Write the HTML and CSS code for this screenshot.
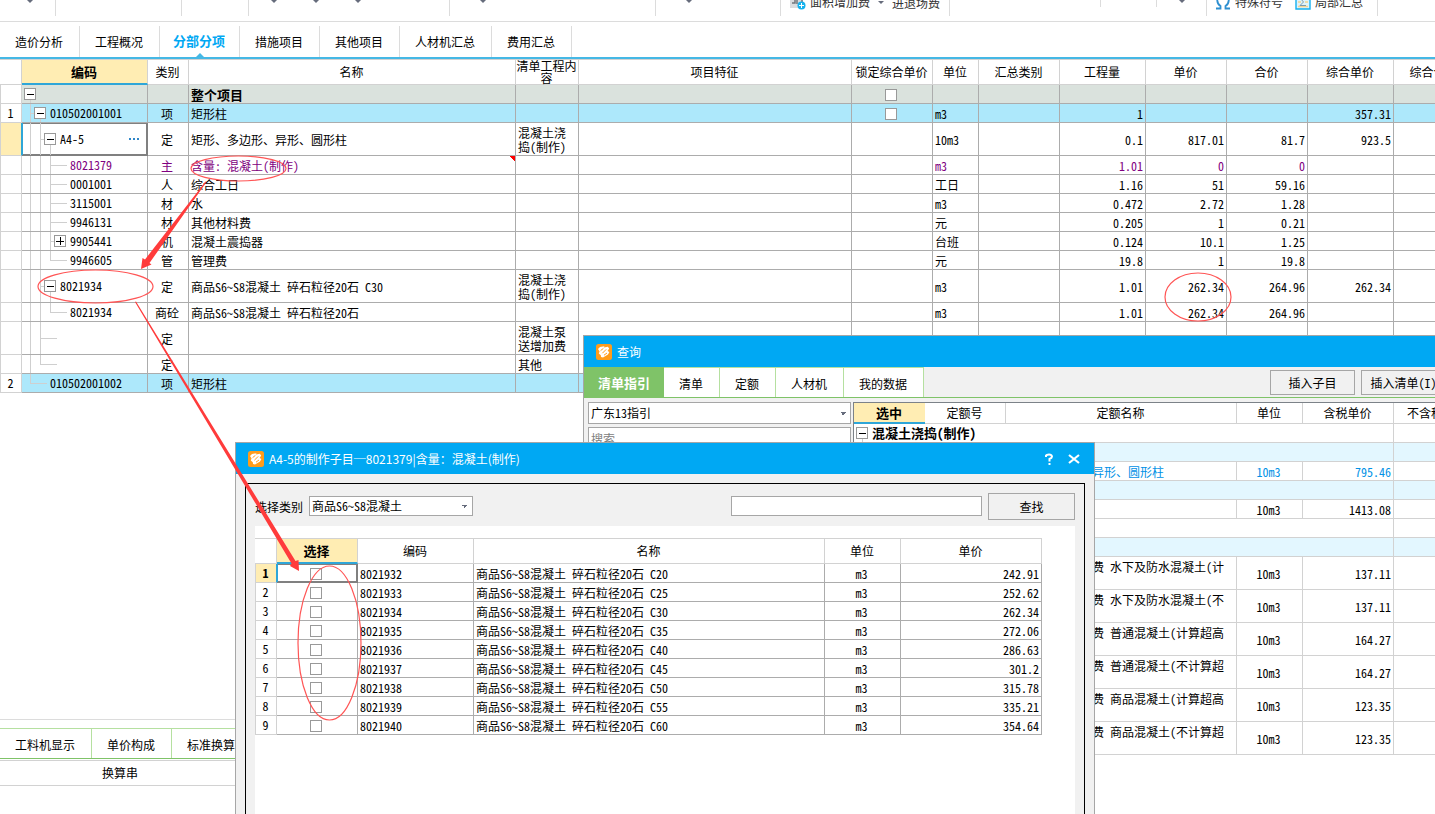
FILE: index.html
```html
<!DOCTYPE html>
<html lang="zh-CN">
<head>
<meta charset="utf-8">
<title>分部分项</title>
<link rel="stylesheet" href="styles.css">
</head>
<body>
<svg width="0" height="0" class="defs" aria-hidden="true">
  <symbol id="logo" viewBox="0 0 16 16">
    <rect width="16" height="16" rx="2.500" fill="#ff9c1a"/>
    <path d="M2 5 4 3 8.400 2.200 8 3.600 11.800 2.800 13.200 4.600 11.600 7 13.400 8 12 10.400 7 13.600 5 13 4.800 11.200 2.800 9.400 3.600 7.400Z" fill="#fff"/>
    <path d="M4.600 6.600 7.400 4.400M6.400 9.200 10.200 5.400M8 11.200 11 9" stroke="#ff9c1a" stroke-width="1" fill="none"/>
  </symbol>
</svg>
<main class="app">
  <div class="toolbar">
    <div class="group g1"><i class="caret"></i></div>
    <div class="group g2"></div>
    <div class="group g3"></div>
    <div class="group g4"><i class="caret"></i><i class="caret"></i><i class="caret"></i></div>
    <div class="group g5"><i class="caret"></i></div>
    <div class="group g6"><i class="caret"></i></div>
    <div class="group g7">
      <button class="tool">
        <svg width="16" height="16" viewBox="0 0 16 16"><path d="M0 1h13v13H0z" fill="#d9dcdf"/><path d="M2 5h3v4H2M7 4v6M9 5h3v3" stroke="#70757c" stroke-width="1.500" fill="none"/><circle cx="11.500" cy="11.500" r="4" fill="#16b2ee"/><path d="M9 11.500h5M11.500 9v5" stroke="#fff"/></svg>
        面积增加费<i class="caret"></i></button>
      <button class="tool low">进退场费</button>
    </div>
    <div class="group g8"></div>
    <div class="group short g9"></div>
    <div class="group g10"><i class="caret"></i></div>
    <div class="group g11">
      <button class="tool">
        <svg width="16" height="16" viewBox="0 0 16 16"><path d="M1 14.500h4.500v-2.500C1.500 9.500 1 3 5 1.500M15 14.500h-4.500v-2.500c4-2.500 4.500-9 .5-10.500" fill="none" stroke="#2d8fd0" stroke-width="1.800"/></svg>
        特殊符号</button>
      <button class="tool">
        <svg width="16" height="16" viewBox="0 0 16 16"><path d="M1 1h14v14H1z" fill="#dff3fb" stroke="#14b0ee" stroke-width="1.400"/><path d="M3 12.500h10M3 8h3M10 8h3" stroke="#f2d492" stroke-width="1.500"/><path d="M11 4.500H5.500L8.500 8 5 11.500h6" fill="none" stroke="#7f9aac"/></svg>
        局部汇总</button>
    </div>
  </div>

  <nav class="tabs">
    <a href="#">造价分析</a><a href="#">工程概况</a><a href="#" class="on">分部分项</a><a href="#">措施项目</a><a href="#">其他项目</a><a href="#">人材机汇总</a><a href="#">费用汇总</a>
  </nav>

  <section class="sheet">
    <table class="grid main">
      <colgroup><col class="w22"><col class="w126"><col class="w41"><col><col class="w63"><col class="w273"><col class="w81"><col class="w46"><col class="w81"><col class="w86"><col class="w81"><col class="w81"><col class="w86"><col class="w81"></colgroup>
      <thead><tr><th></th><th class="hot">编码</th><th>类别</th><th>名称</th><th class="tight">清单工程内容</th><th>项目特征</th><th>锁定综合单价</th><th>单位</th><th>汇总类别</th><th>工程量</th><th>单价</th><th>合价</th><th>综合单价</th><th>综合合价</th></tr></thead>
      <tbody>
        <tr class="total"><td class="no"></td><td><div class="tree root"><b class="box open"></b></div></td><td></td><td><strong>整个项目</strong></td><td></td><td></td><td class="c"><input type="checkbox" aria-label="锁定整个项目"></td><td></td><td></td><td></td><td></td><td></td><td></td><td></td></tr>
        <tr class="item"><td class="no">1</td><td><div class="tree"><i class="tee near"></i><b class="box open"></b>010502001001</div></td><td class="c">项</td><td>矩形柱</td><td></td><td></td><td class="c"><input type="checkbox" aria-label="锁定矩形柱"></td><td>m3</td><td></td><td class="r">1</td><td></td><td></td><td class="r">357.31</td><td></td></tr>
        <tr class="tall"><td class="no cur"></td><td class="focus"><div class="tree"><i class="bar"></i><i class="tee near"></i><b class="box open"></b>A4-5<button class="more" aria-label="更多"><i></i><i></i><i></i></button></div></td><td class="c">定</td><td>矩形、多边形、异形、圆形柱</td><td>混凝土浇捣(制作)</td><td></td><td></td><td>10m3</td><td></td><td class="r">0.1</td><td class="r">817.01</td><td class="r">81.7</td><td class="r">923.5</td><td></td></tr>
        <tr class="main-mat"><td class="no"></td><td><div class="tree"><i class="bar"></i><i class="bar"></i><i class="tee"></i>8021379</div></td><td class="c">主</td><td class="note">含量: 混凝土(制作)</td><td></td><td></td><td></td><td>m3</td><td></td><td class="r">1.01</td><td class="r">0</td><td class="r">0</td><td></td><td></td></tr>
        <tr><td class="no"></td><td><div class="tree"><i class="bar"></i><i class="bar"></i><i class="tee"></i>0001001</div></td><td class="c">人</td><td>综合工日</td><td></td><td></td><td></td><td>工日</td><td></td><td class="r">1.16</td><td class="r">51</td><td class="r">59.16</td><td></td><td></td></tr>
        <tr><td class="no"></td><td><div class="tree"><i class="bar"></i><i class="bar"></i><i class="tee"></i>3115001</div></td><td class="c">材</td><td>水</td><td></td><td></td><td></td><td>m3</td><td></td><td class="r">0.472</td><td class="r">2.72</td><td class="r">1.28</td><td></td><td></td></tr>
        <tr><td class="no"></td><td><div class="tree"><i class="bar"></i><i class="bar"></i><i class="tee"></i>9946131</div></td><td class="c">材</td><td>其他材料费</td><td></td><td></td><td></td><td>元</td><td></td><td class="r">0.205</td><td class="r">1</td><td class="r">0.21</td><td></td><td></td></tr>
        <tr><td class="no"></td><td><div class="tree"><i class="bar"></i><i class="bar"></i><i class="tee near"></i><b class="box"></b>9905441</div></td><td class="c">机</td><td>混凝土震捣器</td><td></td><td></td><td></td><td>台班</td><td></td><td class="r">0.124</td><td class="r">10.1</td><td class="r">1.25</td><td></td><td></td></tr>
        <tr><td class="no"></td><td><div class="tree"><i class="bar"></i><i class="bar"></i><i class="tee end"></i>9946605</div></td><td class="c">管</td><td>管理费</td><td></td><td></td><td></td><td>元</td><td></td><td class="r">19.8</td><td class="r">1</td><td class="r">19.8</td><td></td><td></td></tr>
        <tr class="tall"><td class="no"></td><td><div class="tree"><i class="bar"></i><i class="tee near"></i><b class="box open"></b>8021934</div></td><td class="c">定</td><td>商品S6~S8混凝土 碎石粒径20石 C30</td><td>混凝土浇捣(制作)</td><td></td><td></td><td>m3</td><td></td><td class="r">1.01</td><td class="r">262.34</td><td class="r">264.96</td><td class="r">262.34</td><td></td></tr>
        <tr><td class="no"></td><td><div class="tree"><i class="bar"></i><i class="bar"></i><i class="tee end"></i>8021934</div></td><td class="c">商砼</td><td>商品S6~S8混凝土 碎石粒径20石</td><td></td><td></td><td></td><td>m3</td><td></td><td class="r">1.01</td><td class="r">262.34</td><td class="r">264.96</td><td></td><td></td></tr>
        <tr class="tall"><td class="no"></td><td><div class="tree"><i class="bar"></i><i class="tee"></i></div></td><td class="c">定</td><td></td><td>混凝土泵送增加费</td><td></td><td></td><td></td><td></td><td></td><td></td><td></td><td></td><td></td></tr>
        <tr><td class="no"></td><td><div class="tree"><i class="bar"></i><i class="tee end"></i></div></td><td class="c">定</td><td></td><td>其他</td><td></td><td></td><td></td><td></td><td></td><td></td><td></td><td></td><td></td></tr>
        <tr class="item"><td class="no">2</td><td><div class="tree"><i class="tee end"></i>010502001002</div></td><td class="c">项</td><td>矩形柱</td><td></td><td></td><td></td><td></td><td></td><td></td><td></td><td></td><td></td><td></td></tr>
      </tbody>
    </table>
  </section>

  <section class="detail">
    <nav class="subtabs"><a href="#">工料机显示</a><a href="#">单价构成</a><a href="#">标准换算</a></nav>
    <div class="subhead"><span>换算串</span></div>
  </section>
</main>

<section class="window query" aria-label="查询">
  <header class="title"><svg width="16" height="16"><use href="#logo"/></svg>查询</header>
  <div class="qbar">
    <nav class="qtabs"><a href="#" class="on">清单指引</a><a href="#">清单</a><a href="#">定额</a><a href="#">人材机</a><a href="#">我的数据</a></nav>
    <div class="qbtns"><button class="btn">插入子目</button><button class="btn">插入清单(I)</button></div>
  </div>
  <div class="qbody">
    <div class="side">
      <select aria-label="指引"><option>广东13指引</option></select>
      <input type="text" placeholder="搜索" aria-label="搜索">
    </div>
    <div class="result">
      <table class="grid light">
        <colgroup><col class="w71"><col class="w81"><col class="w231"><col class="w66"><col class="w91"><col></colgroup>
        <thead><tr><th class="hot">选中</th><th>定额号</th><th>定额名称</th><th>单位</th><th>含税单价</th><th class="l">不含税单价</th></tr></thead>
        <tbody>
          <tr><td colspan="5"><div class="tree root"><b class="box open"></b><strong>混凝土浇捣(制作)</strong></div></td><td></td></tr>
          <tr class="band"><td colspan="5"></td><td></td></tr>
          <tr class="link"><td></td><td></td><td>矩形、多边形、异形、圆形柱</td><td class="c">10m3</td><td class="r">795.46</td><td></td></tr>
          <tr class="band"><td colspan="5"></td><td></td></tr>
          <tr><td></td><td></td><td></td><td class="c">10m3</td><td class="r">1413.08</td><td></td></tr>
          <tr><td colspan="5"></td><td></td></tr>
          <tr class="band"><td colspan="5"></td><td></td></tr>
          <tr class="tall"><td></td><td></td><td class="t">混凝土泵送增加费 水下及防水混凝土(计</td><td class="c">10m3</td><td class="r">137.11</td><td></td></tr>
          <tr class="tall"><td></td><td></td><td class="t">混凝土泵送增加费 水下及防水混凝土(不</td><td class="c">10m3</td><td class="r">137.11</td><td></td></tr>
          <tr class="tall"><td></td><td></td><td class="t">混凝土泵送增加费 普通混凝土(计算超高</td><td class="c">10m3</td><td class="r">164.27</td><td></td></tr>
          <tr class="tall"><td></td><td></td><td class="t">混凝土泵送增加费 普通混凝土(不计算超</td><td class="c">10m3</td><td class="r">164.27</td><td></td></tr>
          <tr class="tall"><td></td><td></td><td class="t">混凝土泵送增加费 商品混凝土(计算超高</td><td class="c">10m3</td><td class="r">123.35</td><td></td></tr>
          <tr class="tall"><td></td><td></td><td class="t">混凝土泵送增加费 商品混凝土(不计算超</td><td class="c">10m3</td><td class="r">123.35</td><td></td></tr>
        </tbody>
      </table>
    </div>
  </div>
</section>

<section class="window dialog" role="dialog" aria-label="制作子目">
  <header class="title"><svg width="16" height="16"><use href="#logo"/></svg><span class="grow">A4-5的制作子目─8021379|含量：混凝土(制作)</span>
    <button class="cap" aria-label="帮助"><svg width="12" height="12" viewBox="0 0 12 12"><path d="M3 4V2.500Q3.500 1.500 6 1.500T9 3.500Q9 5 6.500 6V8.500M6.500 10v2" fill="none" stroke="#fff" stroke-width="2"/></svg></button>
    <button class="cap" aria-label="关闭"><svg width="12" height="12" viewBox="0 0 12 12"><path d="M1 2 11 10M11 2 1 10" stroke="#fff" stroke-width="2.200"/></svg></button>
  </header>
  <div class="frame">
    <form class="filter">
      <label for="kind">选择类别</label>
      <select id="kind"><option>商品S6~S8混凝土</option></select>
      <input type="text" aria-label="查找内容">
      <button class="btn" type="button">查找</button>
    </form>
    <div class="panel">
      <table class="grid pick">
        <colgroup><col class="w22"><col class="w81"><col class="w116"><col><col class="w76"><col class="w141"></colgroup>
        <thead><tr><th></th><th class="hot">选择</th><th>编码</th><th>名称</th><th>单位</th><th>单价</th></tr></thead>
        <tbody>
          <tr><td class="no cur">1</td><td class="c focus"><input type="checkbox" aria-label="选择 8021932"></td><td>8021932</td><td>商品S6~S8混凝土 碎石粒径20石 C20</td><td class="c">m3</td><td class="r">242.91</td></tr>
          <tr><td class="no">2</td><td class="c"><input type="checkbox" aria-label="选择 8021933"></td><td>8021933</td><td>商品S6~S8混凝土 碎石粒径20石 C25</td><td class="c">m3</td><td class="r">252.62</td></tr>
          <tr><td class="no">3</td><td class="c"><input type="checkbox" aria-label="选择 8021934"></td><td>8021934</td><td>商品S6~S8混凝土 碎石粒径20石 C30</td><td class="c">m3</td><td class="r">262.34</td></tr>
          <tr><td class="no">4</td><td class="c"><input type="checkbox" aria-label="选择 8021935"></td><td>8021935</td><td>商品S6~S8混凝土 碎石粒径20石 C35</td><td class="c">m3</td><td class="r">272.06</td></tr>
          <tr><td class="no">5</td><td class="c"><input type="checkbox" aria-label="选择 8021936"></td><td>8021936</td><td>商品S6~S8混凝土 碎石粒径20石 C40</td><td class="c">m3</td><td class="r">286.63</td></tr>
          <tr><td class="no">6</td><td class="c"><input type="checkbox" aria-label="选择 8021937"></td><td>8021937</td><td>商品S6~S8混凝土 碎石粒径20石 C45</td><td class="c">m3</td><td class="r">301.2</td></tr>
          <tr><td class="no">7</td><td class="c"><input type="checkbox" aria-label="选择 8021938"></td><td>8021938</td><td>商品S6~S8混凝土 碎石粒径20石 C50</td><td class="c">m3</td><td class="r">315.78</td></tr>
          <tr><td class="no">8</td><td class="c"><input type="checkbox" aria-label="选择 8021939"></td><td>8021939</td><td>商品S6~S8混凝土 碎石粒径20石 C55</td><td class="c">m3</td><td class="r">335.21</td></tr>
          <tr><td class="no">9</td><td class="c"><input type="checkbox" aria-label="选择 8021940"></td><td>8021940</td><td>商品S6~S8混凝土 碎石粒径20石 C60</td><td class="c">m3</td><td class="r">354.64</td></tr>
        </tbody>
      </table>
    </div>
  </div>
</section>

<svg class="marks" width="1435" height="814" viewBox="0 0 1435 814" aria-hidden="true">
  <g fill="none" stroke="#f55" stroke-width="1.200">
    <ellipse cx="238.500" cy="168.500" rx="47.500" ry="12.500"/>
    <ellipse cx="95.500" cy="286.500" rx="57.500" ry="16.500"/>
    <ellipse cx="1198" cy="297" rx="33" ry="24"/>
    <ellipse cx="329.500" cy="643" rx="31.500" ry="77"/>
  </g>
  <g fill="#ff3b3b">
    <path d="M206.500 182 149.500 263 151.500 264.500 141 269 142.500 258 145 259.500 205.500 181.500Z"/>
    <path d="M135 302 136 301.500 295.500 561 298.500 560 299 571 290 566 291.500 563.500Z"/>
  </g>
</svg>
</body>
</html>
```

FILE: styles.css
```css
* { box-sizing: border-box; }
html, body { height: 100%; }
body {
  margin: 0;
  overflow: hidden;
  position: relative;
  background: #fff;
  color: #000;
  font: 12px/14px "Noto Sans CJK SC", "Noto Sans", sans-serif;
  font-feature-settings: "hwid";
}
button, input, select { font: inherit; font-feature-settings: inherit; color: inherit; margin: 0; }
a { color: inherit; text-decoration: none; }
strong { font-size: 13px; }
.defs { position: absolute; }

.app { height: 100%; display: flex; flex-direction: column; }

/* toolbar */
.toolbar { display: flex; flex: none; height: 22px; overflow: hidden; border-bottom: 1px solid #dcdcdc; background: #fff; }
.group { flex: none; display: flex; height: 16px; border-right: 1px solid #dcdcdc; justify-content: center; gap: 36px; }
.group.short { height: 7px; }
.g1 { width: 56px; padding-left: 5px; }
.g2 { width: 126px; }
.g3 { width: 67px; }
.g4 { width: 201px; justify-content: flex-start; padding-left: 22px; }
.g5 { width: 206px; justify-content: flex-start; padding-left: 30px; }
.g6 { width: 125px; justify-content: flex-start; padding-left: 30px; }
.g7 { width: 169px; justify-content: flex-start; padding-left: 9px; gap: 8px; }
.g8 { width: 151px; height: 7px; }
.g9 { width: 56px; }
.g10 { width: 50px; }
.g11 { width: 171px; justify-content: flex-start; padding-left: 8px; gap: 12px; }
.caret { flex: none; border: 3px solid transparent; border-top-color: #666c7c; border-bottom: 0; height: 3px; }
.tool { display: flex; align-items: center; align-self: flex-end; gap: 4px; height: 16px; border: 0; padding: 0; margin-bottom: 6px; background: none; color: #333; white-space: nowrap; }
.tool svg { flex: none; }
.tool .caret { margin-left: 4px; }
.tool.low { margin-bottom: 5px; }

/* page tabs */
.tabs { display: flex; flex: none; height: 37px; padding-top: 4px; border-bottom: 2px solid #45b8e5; }
.tabs a { position: relative; padding: 8px 16px 0 15px; border-right: 1px solid #dcdcdc; line-height: 16px; }
.tabs .on { padding: 7px 14px 0 13px; color: #00a8f3; font-weight: 700; font-size: 13px; }
.tabs .on::after { content: ""; position: absolute; left: 50%; bottom: 0; margin-left: -4px; border: 4px solid transparent; border-top: 0; border-bottom-color: #45b8e5; }

/* grids */
.sheet { flex: 1; overflow: hidden; border-top: 1px solid #d2d2d2; }
.grid { table-layout: fixed; border-collapse: separate; border-spacing: 0; }
.main { width: calc(100% + 40px); }
.grid th { height: 25px; padding: 0 1px 0 0; font-weight: 400; border: solid #d2d2d2; border-width: 0 1px 1px 0; background: #fff; white-space: nowrap; }
.grid th.tight { white-space: normal; line-height: 12px; }
.grid th.hot { background: #ffedb3; font-weight: 700; font-size: 13px; border-bottom: 2px solid #2fa6d8; }
.grid th.l { text-align: left; padding-left: 13px; }
.grid td { height: 19px; padding: 1px 2px 0; border: solid #acacac; border-width: 0 1px 1px 0; overflow: hidden; white-space: nowrap; }
.grid .tall td { height: 33px; white-space: normal; }
.grid td.c { text-align: center; padding: 1px 2px 0 0; }
.grid td.r { text-align: right; }
.grid td.no { text-align: center; padding: 0 1px 0 0; border-color: #d2d2d2; border-left: 1px solid #d2d2d2; }
.grid td.cur { background: #ffedb3; font-weight: 700; }
.grid .total td { background: #dae2dd; }
.grid .item td { background: #ade8fb; }
.grid tr td.no:not(.cur) { background: #fff; }
.grid .main-mat td { color: #800080; }
.grid td.note { background: linear-gradient(45deg, transparent 50%, red 50%) right top / 6px 6px no-repeat; }
.grid td.focus { box-shadow: inset 1px 0 #2fa6d8, inset -1px -1px #808080, inset 0 1px #808080; border-color: #808080; }
.w22 { width: 22px; } .w41 { width: 41px; } .w46 { width: 46px; } .w63 { width: 63px; }
.w66 { width: 66px; } .w71 { width: 71px; } .w76 { width: 76px; } .w81 { width: 81px; }
.w86 { width: 86px; } .w91 { width: 91px; } .w116 { width: 116px; } .w126 { width: 126px; }
.w141 { width: 141px; } .w231 { width: 231px; } .w273 { width: 273px; }
.grid td.cur { border-right-color: #2fa6d8; }

.light td { border-color: #d2d2d2; }
.light .band td { background: #e3f7ff; }
.light .link td { color: #0091e6; }
.grid.light td.t { vertical-align: top; padding-top: 3px; white-space: nowrap; }

input[type=checkbox] { appearance: none; display: block; width: 12px; height: 12px; margin: 0 auto; border: 1px solid #999; background: #fff; }
.grid td:has(> input) { padding-top: 0; }

/* tree column */
.grid td:has(.tree) { padding: 0; }
.tree { display: flex; align-items: center; height: 18px; padding-left: 8px; }
.tall .tree { height: 32px; }
.tree.root { padding-left: 2px; }
.bar, .tee { flex: none; align-self: stretch; width: 10px; background: linear-gradient(#cfcfcf, #cfcfcf) 0 0 / 1px 100% no-repeat; }
.tee { width: 20px; background: linear-gradient(#cfcfcf, #cfcfcf) 0 0 / 1px 100% no-repeat, linear-gradient(#cfcfcf, #cfcfcf) 0 50% / 17px 1px no-repeat; }
.tee.near { width: 4px; }
.tee.end { background-size: 1px 50%, 17px 1px; }
.box { position: relative; flex: none; width: 12px; height: 12px; margin-right: 4px; border: 1px solid #999; background: linear-gradient(#000, #000) center / 8px 1px no-repeat, linear-gradient(#000, #000) center / 1px 8px no-repeat, #fff; }
.box.open { background: linear-gradient(#000, #000) center / 7px 1px no-repeat, #fff; }
.box.open::after { content: ""; position: absolute; left: 5px; top: 11px; width: 1px; height: 12px; background: #cfcfcf; }
.more { display: flex; gap: 2px; margin-left: auto; margin-right: 8px; padding: 0; border: 0; background: none; }
.more i { width: 2px; height: 2px; background: #2f86c8; }

/* lower detail pane */
.detail { flex: none; height: 95px; border-top: 1px solid #dcdcdc; padding-top: 8px; }
.subtabs { display: flex; height: 31px; border-top: 1px solid #b5e0a0; border-bottom: 1px solid #7fc368; }
.subtabs a { padding: 9px 16px 0 15px; border-right: 1px solid #b5e0a0; }
.subhead { margin-top: 1px; height: 26px; border: solid #d2d2d2; border-width: 1px 0; line-height: 24px; }
.subhead span { display: block; width: 240px; text-align: center; }

/* floating windows */
.window { position: absolute; bottom: 0; display: flex; flex-direction: column; border: 1px solid #a6a6a6; border-bottom: 0; background: #f1f1f1; }
.title { flex: none; display: flex; align-items: center; gap: 5px; height: 31px; padding: 0 14px 0 12px; background: #00a8f3; color: #fff; font-feature-settings: normal; }
.grow { flex: 1; }
.cap { width: 12px; height: 12px; padding: 0; border: 0; margin-left: 8px; background: none; }
.cap svg { display: block; }
.btn { border: 1px solid #a6a6a6; background: #f1f1f1; padding: 0; }
select, input[type=text] { border: 1px solid #a6a6a6; border-radius: 0; background-color: #fff; padding: 0 2px; outline: 0; }
select { appearance: none; background-image: linear-gradient(45deg, transparent 50%, #666c7c 50%), linear-gradient(-45deg, transparent 50%, #666c7c 50%); background-size: 3px 3px; background-position: right 7px center, right 4px center; background-repeat: no-repeat; }
input::placeholder { color: #808080; opacity: 1; }

.query { left: 583px; right: 0; top: 335px; border-right: 0; }
.qbar { flex: none; display: flex; justify-content: space-between; height: 31px; border-bottom: 1px solid #7fc368; }
.qtabs { display: flex; }
.qtabs a { padding: 9px 16px 0 15px; border: solid #b5e0a0; border-width: 1px 1px 0 0; background: #fff; }
.qtabs .on { padding: 8px 14px 0; border-color: #7fc368; border-right: 0; background: #7fc368; color: #fff; font-weight: 700; font-size: 13px; }
.qbtns { display: flex; gap: 6px; padding: 3px 0 2px; margin-right: -11px; }
.qbtns .btn { width: 85px; height: 25px; }
.qbody { flex: 1; display: flex; gap: 2px; padding: 4px 0 0 4px; min-height: 0; }
.side { flex: none; width: 263px; display: flex; flex-direction: column; gap: 3px; }
.side select, .side input { height: 22px; }
.result { flex: 1; min-width: 0; overflow: hidden; border: solid #7c8288; border-width: 1px 0 0 1px; background: #fff; }
.light { width: 100%; min-width: 621px; }
.light th { height: 21px; }
.light th.hot { border-right: 0; }

.dialog { left: 235px; top: 442px; width: 860px; }
.frame { flex: 1; display: flex; flex-direction: column; margin: 9px 9px 0; border: 1px solid #000; border-bottom: 0; padding: 9px 9px 0; }
.filter { display: flex; align-items: center; height: 27px; }
.filter select { width: 164px; height: 20px; margin: 0 0 1px 6px; }
.filter input { width: 251px; height: 20px; margin: 0 0 1px auto; }
.filter .btn { width: 87px; height: 27px; margin-left: 6px; }
.panel { flex: 1; margin-top: 6px; padding: 12px 33px 0 0; background: #fff; }
.pick { width: 100%; border-top: 1px solid #d2d2d2; }

.marks { position: absolute; left: 0; top: 0; pointer-events: none; }
```
